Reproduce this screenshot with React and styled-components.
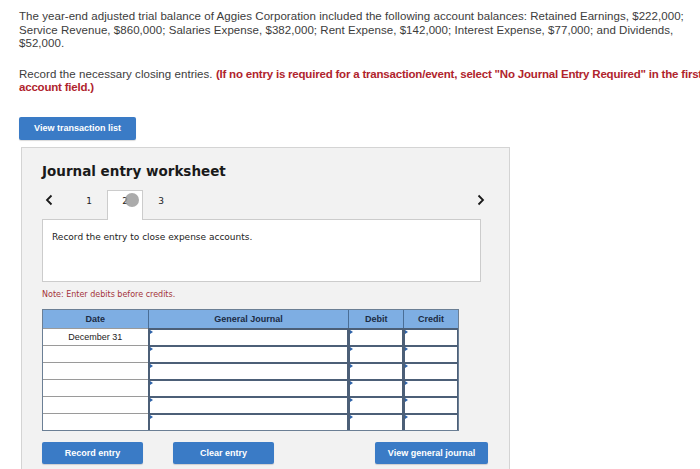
import styled, { createGlobalStyle } from "styled-components";

const GlobalStyle = createGlobalStyle`
  html, body {
    margin: 0;
    padding: 0;
    background: #ffffff;
    overflow: hidden;
  }
  body {
    font-family: "Liberation Sans", Arial, sans-serif;
    color: #333333;
  }
`;

const filas = [
  { fecha: "December 31" },
  { fecha: "" },
  { fecha: "" },
  { fecha: "" },
  { fecha: "" },
  { fecha: "" },
];

function ChevronIcon({ derecha }) {
  return (
    <svg width="8" height="12" viewBox="0 0 8 12">
      <path
        d={derecha ? "M1.5 1.5 L6 6 L1.5 10.5" : "M6.5 1.5 L2 6 L6.5 10.5"}
        fill="none"
        stroke="#1a1a1a"
        strokeWidth="1.8"
      />
    </svg>
  );
}

function CeldaInput({ ancho }) {
  return (
    <InputCell $ancho={ancho}>
      <Flecha />
    </InputCell>
  );
}

export default function App() {
  return (
    <Container>
      <GlobalStyle />
      <Enunciado>
        The year-end adjusted trial balance of Aggies Corporation included the following account balances: Retained Earnings, $222,000;
        <br />
        Service Revenue, $860,000; Salaries Expense, $382,000; Rent Expense, $142,000; Interest Expense, $77,000; and Dividends,
        <br />
        $52,000.
      </Enunciado>
      <Enunciado $margen="22px">
        Record the necessary closing entries.{" "}
        <Resaltado>
          (If no entry is required for a transaction/event, select "No Journal Entry Required" in the first
          <br />
          account field.)
        </Resaltado>
      </Enunciado>

      <BotonAzul $ancho="117px" $alto="23px">View transaction list</BotonAzul>

      <Panel>
        <Titulo>Journal entry worksheet</Titulo>
        <Pestanas>
          <NavFlecha>
            <ChevronIcon />
          </NavFlecha>
          <Pestana>1</Pestana>
          <Pestana $activa>
            2
            <Cargando />
          </Pestana>
          <Pestana>3</Pestana>
          <Relleno />
          <NavFlecha>
            <ChevronIcon derecha />
          </NavFlecha>
        </Pestanas>
        <CajaTexto>Record the entry to close expense accounts.</CajaTexto>
        <Nota>Note: Enter debits before credits.</Nota>

        <Tabla>
          <FilaTabla>
            <Encabezado $ancho="105px">Date</Encabezado>
            <Encabezado $ancho="201px">General Journal</Encabezado>
            <Encabezado $ancho="55px">Debit</Encabezado>
            <Encabezado $ancho="55px">Credit</Encabezado>
          </FilaTabla>
          {filas.map((f, i) => (
            <FilaTabla key={i}>
              <FechaCell>{f.fecha}</FechaCell>
              <CeldaInput ancho="201px" />
              <CeldaInput ancho="55px" />
              <CeldaInput ancho="55px" />
            </FilaTabla>
          ))}
        </Tabla>

        <Acciones>
          <BotonAzul $ancho="101px" $alto="22px">Record entry</BotonAzul>
          <BotonAzul $ancho="101px" $alto="22px" $izq="30px">Clear entry</BotonAzul>
          <BotonAzul $ancho="113px" $alto="22px" $izq="101px">View general journal</BotonAzul>
        </Acciones>
      </Panel>
    </Container>
  );
}

const Container = styled.div`
  width: 720px;
  padding: 10px 0 0 19px;
  box-sizing: border-box;
`;

const Enunciado = styled.p`
  margin: 0 0 ${({ $margen }) => $margen || "17px"} 0;
  font-size: 11.5px;
  line-height: 13.5px;
  color: #3c3c3c;
  white-space: nowrap;
  letter-spacing: 0.05px;
`;

const Resaltado = styled.span`
  color: #b0242d;
  font-weight: bold;
  letter-spacing: -0.2px;
`;

const BotonAzul = styled.button`
  display: flex;
  align-items: center;
  justify-content: center;
  width: ${({ $ancho }) => $ancho};
  height: ${({ $alto }) => $alto};
  margin-left: ${({ $izq }) => $izq || "0"};
  padding: 0;
  border: none;
  border-radius: 2px;
  background: #3a7bc6;
  color: #ffffff;
  font-family: "Liberation Sans", Arial, sans-serif;
  font-size: 9px;
  font-weight: bold;
  box-shadow: 0 1px 1px rgba(0, 0, 0, 0.15);
  cursor: pointer;
`;

const Panel = styled.section`
  margin: 7px 0 0 2px;
  width: 489px;
  height: 330px;
  box-sizing: border-box;
  background: #f2f2f2;
  border: 1px solid #d4d4d4;
  padding: 13px 0 0 20px;
  font-family: "DejaVu Sans", Verdana, sans-serif;
`;

const Titulo = styled.h2`
  margin: 0;
  font-size: 13.5px;
  line-height: 20px;
  font-weight: bold;
  color: #1a1a1a;
`;

const Pestanas = styled.div`
  display: flex;
  align-items: stretch;
  margin-top: 9px;
  width: 446px;
  height: 29px;
`;

const NavFlecha = styled.div`
  display: flex;
  align-items: flex-start;
  justify-content: center;
  width: 14px;
  padding-top: 4px;
`;

const Pestana = styled.div`
  position: relative;
  display: flex;
  align-items: flex-start;
  justify-content: center;
  width: 36px;
  font-size: 9px;
  line-height: 12px;
  color: #222;
  padding-top: 4px;
  box-sizing: border-box;
  background: ${({ $activa }) => ($activa ? "#ffffff" : "transparent")};
  border: 1px solid ${({ $activa }) => ($activa ? "#cccccc" : "transparent")};
  border-bottom: none;
  margin-bottom: -1px;
  z-index: 1;
  &:nth-child(2) {
    margin-left: 15px;
  }
`;

const Cargando = styled.span`
  position: absolute;
  left: 17px;
  top: 2px;
  width: 14px;
  height: 14px;
  border-radius: 50%;
  background: rgba(150, 150, 150, 0.8);
`;

const Relleno = styled.div`
  flex: 1;
`;

const CajaTexto = styled.div`
  width: 439px;
  height: 63px;
  box-sizing: border-box;
  background: #ffffff;
  border: 1px solid #cccccc;
  padding: 12px 0 0 9px;
  font-size: 9px;
  color: #222;
`;

const Nota = styled.p`
  margin: 8px 0 0 0;
  font-size: 8px;
  color: #a4343a;
`;

const Tabla = styled.div`
  margin-top: 10px;
  display: flex;
  flex-direction: column;
  width: 417px;
  border: 1px solid #6b7f95;
  box-sizing: border-box;
  font-family: "Liberation Sans", Arial, sans-serif;
`;

const FilaTabla = styled.div`
  display: flex;
  height: 17px;
  &:first-child {
    height: 18px;
  }
`;

const Encabezado = styled.div`
  display: flex;
  align-items: center;
  justify-content: center;
  width: ${({ $ancho }) => $ancho};
  box-sizing: border-box;
  background: #7eaee3;
  border-left: 1px solid #4a6e96;
  &:first-child {
    border-left: none;
  }
  font-size: 9px;
  font-weight: bold;
  color: #1b2b44;
`;

const FechaCell = styled.div`
  display: flex;
  align-items: center;
  justify-content: center;
  width: 105px;
  box-sizing: border-box;
  background: #ffffff;
  border-top: 1px solid #9a9a9a;
  font-size: 9px;
  color: #222;
`;

const InputCell = styled.div`
  position: relative;
  width: ${({ $ancho }) => $ancho};
  box-sizing: border-box;
  background: #ffffff;
  border: 1px solid #4c5f77;
  border-width: 2px 1px 0 2px;
`;

const Flecha = styled.span`
  position: absolute;
  left: 0;
  top: 0;
  width: 0;
  height: 0;
  border-top: 2px solid transparent;
  border-bottom: 2px solid transparent;
  border-left: 3px solid #2d62a8;
`;

const Acciones = styled.div`
  display: flex;
  margin-top: 11px;
`;
